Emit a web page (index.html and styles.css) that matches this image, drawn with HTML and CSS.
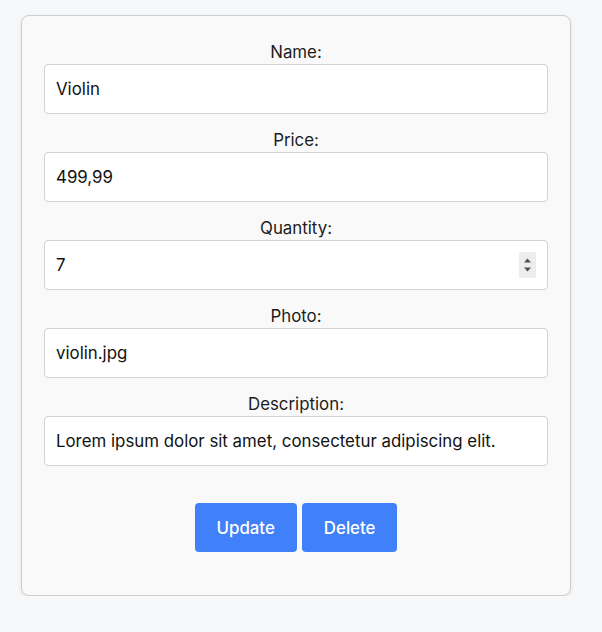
FILE: index.html
```html
<!DOCTYPE html>
<html lang="en">
<head>
<meta charset="utf-8">
<title>Edit product</title>
<link rel="stylesheet" href="styles.css">
</head>
<body>
<form class="card">
  <div class="field">
    <label class="label" for="name">Name:</label>
    <input class="input" id="name" type="text" value="Violin">
  </div>
  <div class="field">
    <label class="label" for="price">Price:</label>
    <input class="input" id="price" type="text" value="499,99">
  </div>
  <div class="field">
    <label class="label" for="qty">Quantity:</label>
    <div class="number-wrap">
      <input class="input number" id="qty" type="number" value="7">
      <span class="spinner">
        <svg width="17" height="26" viewBox="0 0 17 26">
          <rect width="17" height="26" fill="#ededed"/>
          <path d="M5 10.5 L8.5 6.5 L12 10.5 Z" fill="#505050"/>
          <path d="M5 15.5 L8.5 19.5 L12 15.5 Z" fill="#505050"/>
        </svg>
      </span>
    </div>
  </div>
  <div class="field">
    <label class="label" for="photo">Photo:</label>
    <input class="input" id="photo" type="text" value="violin.jpg">
  </div>
  <div class="field">
    <label class="label" for="desc">Description:</label>
    <input class="input" id="desc" type="text" value="Lorem ipsum dolor sit amet, consectetur adipiscing elit.">
  </div>
  <div class="actions">
    <button class="btn" type="button">Update</button>
    <button class="btn" type="button">Delete</button>
  </div>
</form>
</body>
</html>
```
FILE: styles.css
```css
* { box-sizing: border-box; }
html, body { margin: 0; padding: 0; }
body {
  background: #f7f8fa;
  font-family: Inter, "Liberation Sans", Arial, sans-serif;
  color: #1c1c1c;
  padding: 15px 0 0 21px;
}
.card {
  width: 550px;
  background: #f9f9f9;
  border: 1px solid #cfcfcf;
  border-radius: 8px;
  box-shadow: 0 2px 5px rgba(0, 0, 0, 0.08);
  padding: 22px 22px 43px;
}
.field {
  display: flex;
  flex-direction: column;
  margin-bottom: 12px;
}
.label {
  display: block;
  margin-top: 4px;
  margin-bottom: 2px;
  line-height: 20px;
  font-size: 16.85px;
  text-align: center;
  color: #1c1c1c;
}
.input {
  display: block;
  width: 100%;
  height: 50px;
  border: 1px solid #d2d2d2;
  border-radius: 4px;
  background: #fff;
  padding: 0 11px;
  font-family: inherit;
  font-size: 16.85px;
  color: #111;
  outline: none;
}
.number-wrap { position: relative; }
.number { -moz-appearance: textfield; appearance: textfield; }
.number::-webkit-inner-spin-button,
.number::-webkit-outer-spin-button { -webkit-appearance: none; margin: 0; }
.spinner {
  position: absolute;
  right: 12px;
  top: 12px;
  width: 17px;
  height: 26px;
  display: block;
}
.spinner svg { display: block; }
.actions {
  display: flex;
  justify-content: center;
  gap: 5px;
  margin-top: 37px;
}
.btn {
  height: 49px;
  padding: 0 22px;
  border: none;
  border-radius: 4px;
  background: #4080f8;
  color: #fff;
  font-family: inherit;
  font-size: 16.85px;
  font-weight: 500;
}
```
